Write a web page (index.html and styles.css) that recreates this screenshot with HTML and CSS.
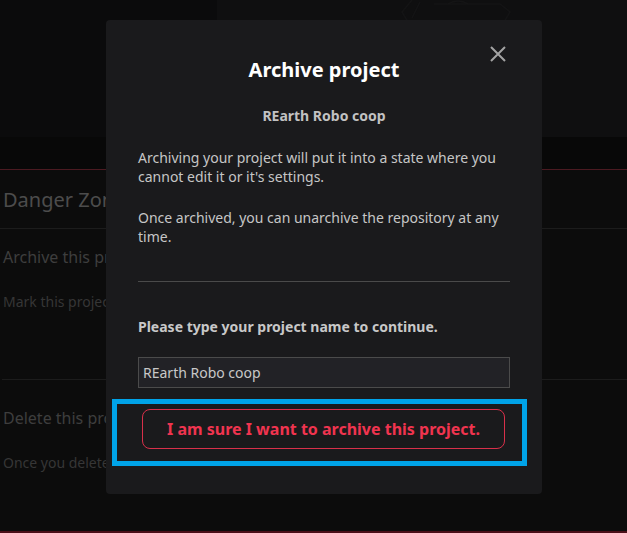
FILE: index.html
```html
<!DOCTYPE html>
<html lang="en">
<head>
<meta charset="utf-8">
<title>Archive project</title>
<link rel="stylesheet" href="styles.css">
</head>
<body>
<div class="page">
  <header class="header">
    <div class="header-left"></div>
    <div class="header-right">
      <svg class="ghost-logo" width="120" height="22" viewBox="0 0 120 22" aria-hidden="true">
        <path d="M12 0 L2 12 L8 22 M20 2 L12 18 M34 4 H100 L110 12 L104 22" fill="none" stroke="#141415" stroke-width="1.5"/>
        <path d="M48 4 Q58 -2 68 4" fill="none" stroke="#141415" stroke-width="1.5"/>
      </svg>
    </div>
  </header>
  <div class="subbar"></div>
  <section class="danger">
    <h2 class="danger-title">Danger Zone</h2>
    <div class="danger-row archive-row">
      <h3 class="row-title">Archive this project</h3>
      <p class="row-desc">Mark this project as archived and read-only.</p>
    </div>
    <div class="danger-row delete-row">
      <h3 class="row-title">Delete this project</h3>
      <p class="row-desc">Once you delete a project, there is no going back.</p>
    </div>
  </section>
  <div class="footer-line"></div>
</div>

<div class="overlay">
  <div class="modal" role="dialog" aria-labelledby="modal-title">
    <button class="close" aria-label="Close">
      <svg width="16" height="16" viewBox="0 0 16 16"><path d="M1 1 L15 15 M15 1 L1 15" stroke="#a3a3a3" stroke-width="2" fill="none"/></svg>
    </button>
    <h2 class="modal-title" id="modal-title">Archive project</h2>
    <p class="modal-sub">REarth Robo coop</p>
    <p class="modal-text">Archiving your project will put it into a state where you cannot edit it or it's settings.</p>
    <p class="modal-text second">Once archived, you can unarchive the repository at any time.</p>
    <hr class="divider">
    <p class="confirm-label">Please type your project name to continue.</p>
    <input class="confirm-input" type="text" value="REarth Robo coop">
    <div class="highlight">
      <button class="danger-btn">I am sure I want to archive this project.</button>
    </div>
  </div>
</div>
</body>
</html>
```
FILE: styles.css
```css
* { box-sizing: border-box; }
html, body { margin: 0; padding: 0; }
body {
  background: #0b0b0b;
  font-family: "Noto Sans", "Open Sans", sans-serif;
  width: 627px;
  height: 533px;
  overflow: hidden;
}

.page {
  display: flex;
  flex-direction: column;
  height: 533px;
}

.header {
  display: flex;
  height: 137px;
}
.header-left { width: 217px; background: #0b0b0c; }
.header-right {
  flex: 1;
  background: #0f0f10;
  padding-left: 183px;
}
.ghost-logo { display: block; }

.subbar {
  height: 33px;
  background: #080808;
  border-bottom: 1px solid #4b1a21;
}

.danger {
  flex: 1;
  background: #0c0c0c;
  padding-left: 3px;
}
.danger-title {
  margin: 0;
  height: 59px;
  padding-top: 16px;
  font-size: 20px;
  line-height: 28px;
  font-weight: 400;
  color: #4c4c4c;
  border-bottom: 1px solid #1c1c1c;
  margin-left: -3px;
  padding-left: 3px;
}
.danger-row {
  border-bottom: 1px solid #1c1c1c;
  margin-left: -1px;
  padding-left: 1px;
}
.archive-row { height: 151px; padding-top: 17px; }
.delete-row { border-bottom: none; padding-top: 27px; }
.row-title {
  margin: 0;
  font-size: 16px;
  line-height: 22px;
  font-weight: 400;
  color: #3e3e3e;
  white-space: nowrap;
}
.row-desc {
  margin: 24px 0 0;
  font-size: 14px;
  line-height: 19px;
  color: #363636;
  white-space: nowrap;
}

.footer-line {
  height: 2px;
  background: #4a0f18;
}

.overlay {
  position: fixed;
  inset: 0;
  display: flex;
  align-items: flex-start;
  padding: 20px 0 0 106px;
}
.modal {
  position: relative;
  width: 436px;
  height: 474px;
  background: #1a1a1c;
  border-radius: 4px;
  padding: 36px 32px 29px;
}
.close {
  position: absolute;
  top: 26px;
  right: 36px;
  width: 16px;
  height: 16px;
  padding: 0;
  border: 0;
  background: none;
  cursor: pointer;
}
.close svg { display: block; }

.modal-title {
  margin: 0;
  text-align: center;
  font-size: 20px;
  line-height: 28px;
  font-weight: 700;
  color: #ffffff;
}
.modal-sub {
  margin: 22px 0 0;
  text-align: center;
  font-size: 14px;
  line-height: 19px;
  font-weight: 700;
  color: #c2c2c2;
}
.modal-text {
  margin: 23px 0 0;
  font-size: 14px;
  line-height: 19px;
  color: #c6c6c6;
}
.modal-text.second { margin-top: 22px; }
.divider {
  margin: 35px 0 0;
  border: 0;
  border-top: 1px solid #4a4a4a;
  height: 0;
}
.confirm-label {
  margin: 35px 0 0;
  font-size: 14px;
  line-height: 19px;
  font-weight: 700;
  color: #c8c8c8;
}
.confirm-input {
  display: block;
  margin-top: 21px;
  width: 100%;
  height: 31px;
  padding: 0 4px;
  background: #222226;
  border: 1px solid #4b4b4b;
  color: #c8c8c8;
  font-family: inherit;
  font-size: 14px;
  outline: none;
}
.highlight {
  margin: 11px -17px 0 -26px;
  border: 5px solid #00a3e8;
  padding: 5px 17px 12px 25px;
}
.danger-btn {
  display: block;
  width: 100%;
  height: 40px;
  background: transparent;
  border: 1px solid #d8304a;
  border-radius: 8px;
  color: #f0344f;
  font-family: inherit;
  font-size: 16px;
  font-weight: 700;
  cursor: pointer;
}
```
